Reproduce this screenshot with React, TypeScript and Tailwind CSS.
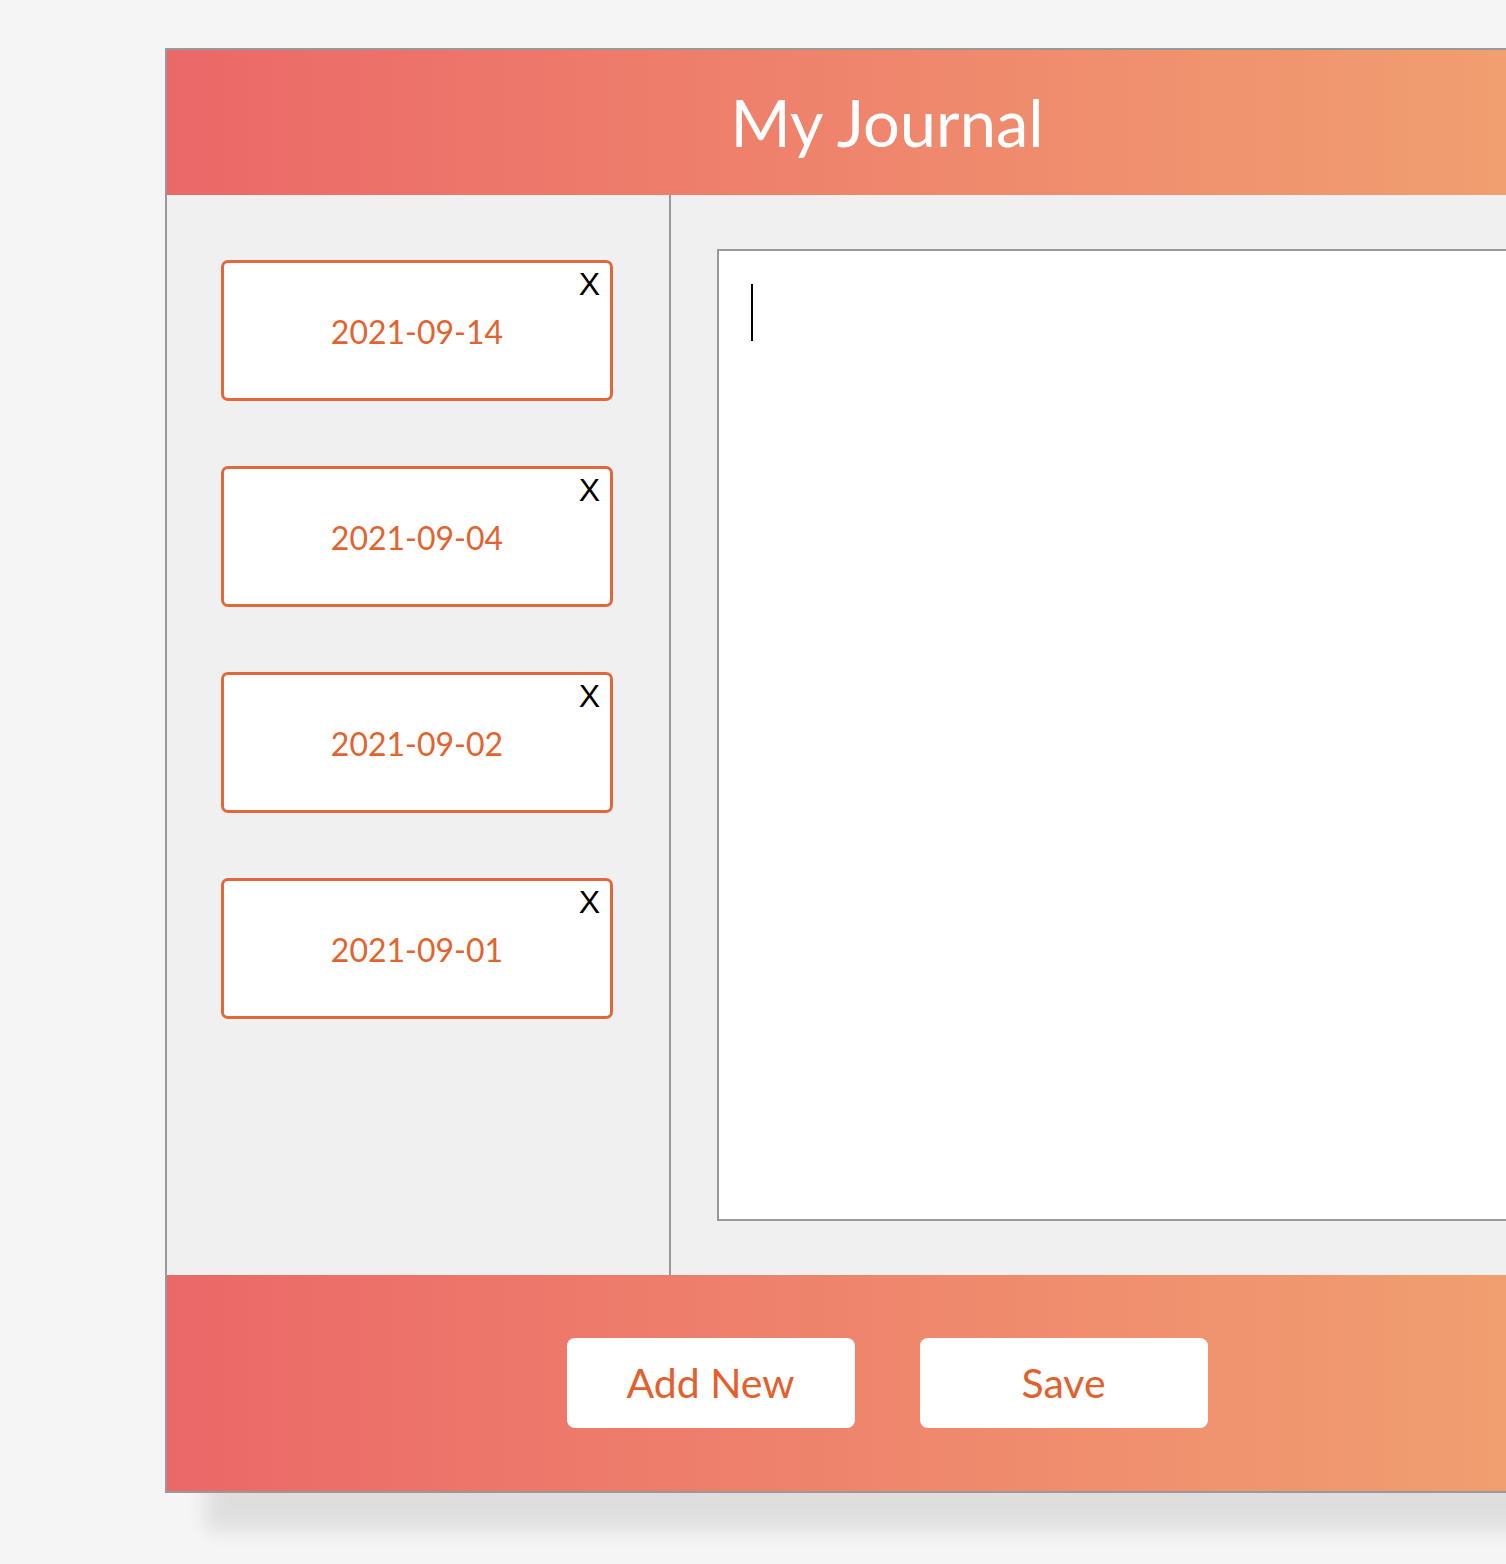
import React from "react";

const entries = ["2021-09-14", "2021-09-04", "2021-09-02", "2021-09-01"];

function EntryCard({ date }: { date: string }) {
  return (
    <div className="relative flex h-[141px] w-[392px] items-center justify-center rounded-[7px] border-[3px] border-[#e2683b] bg-white">
      <span className="absolute right-[10px] top-[5px] font-['Liberation_Sans',sans-serif] text-[32px] leading-none text-black">
        X
      </span>
      <span className="pt-[2px] font-['Lato',sans-serif] text-[32px] text-[#e3632f]">{date}</span>
    </div>
  );
}

export default function App() {
  return (
    <div className="h-[1564px] w-full overflow-hidden bg-[#f5f5f5] font-['Lato',sans-serif]">
      <div className="ml-[165px] mt-[48px] w-[1444px] border-2 border-[#999999] shadow-[40px_38px_18px_rgba(0,0,0,0.09)]">
        <header className="flex h-[145px] items-center justify-center bg-gradient-to-r from-[#eb6868] to-[#f1a271]">
          <h1 className="text-[65px] leading-none text-white">My Journal</h1>
        </header>

        <div className="flex h-[1080px] bg-[#f0f0f0]">
          <aside className="flex w-[504px] shrink-0 flex-col gap-[65px] border-r-2 border-[#999999] pl-[54px] pt-[65px]">
            {entries.map((d) => (
              <EntryCard key={d} date={d} />
            ))}
          </aside>

          <main className="flex-1 px-[46px] py-[54px]">
            <div className="h-full border-2 border-[#999999] bg-white px-[32px] pt-[33px]">
              <div className="h-[57px] w-[2px] bg-black" />
            </div>
          </main>
        </div>

        <footer className="flex h-[216px] items-center justify-center gap-[65px] bg-gradient-to-r from-[#eb6868] to-[#f1a271]">
          <button className="h-[90px] w-[288px] rounded-[8px] bg-white text-[41px] text-[#e35f2c]">Add New</button>
          <button className="h-[90px] w-[288px] rounded-[8px] bg-white text-[41px] text-[#e35f2c]">Save</button>
        </footer>
      </div>
    </div>
  );
}
